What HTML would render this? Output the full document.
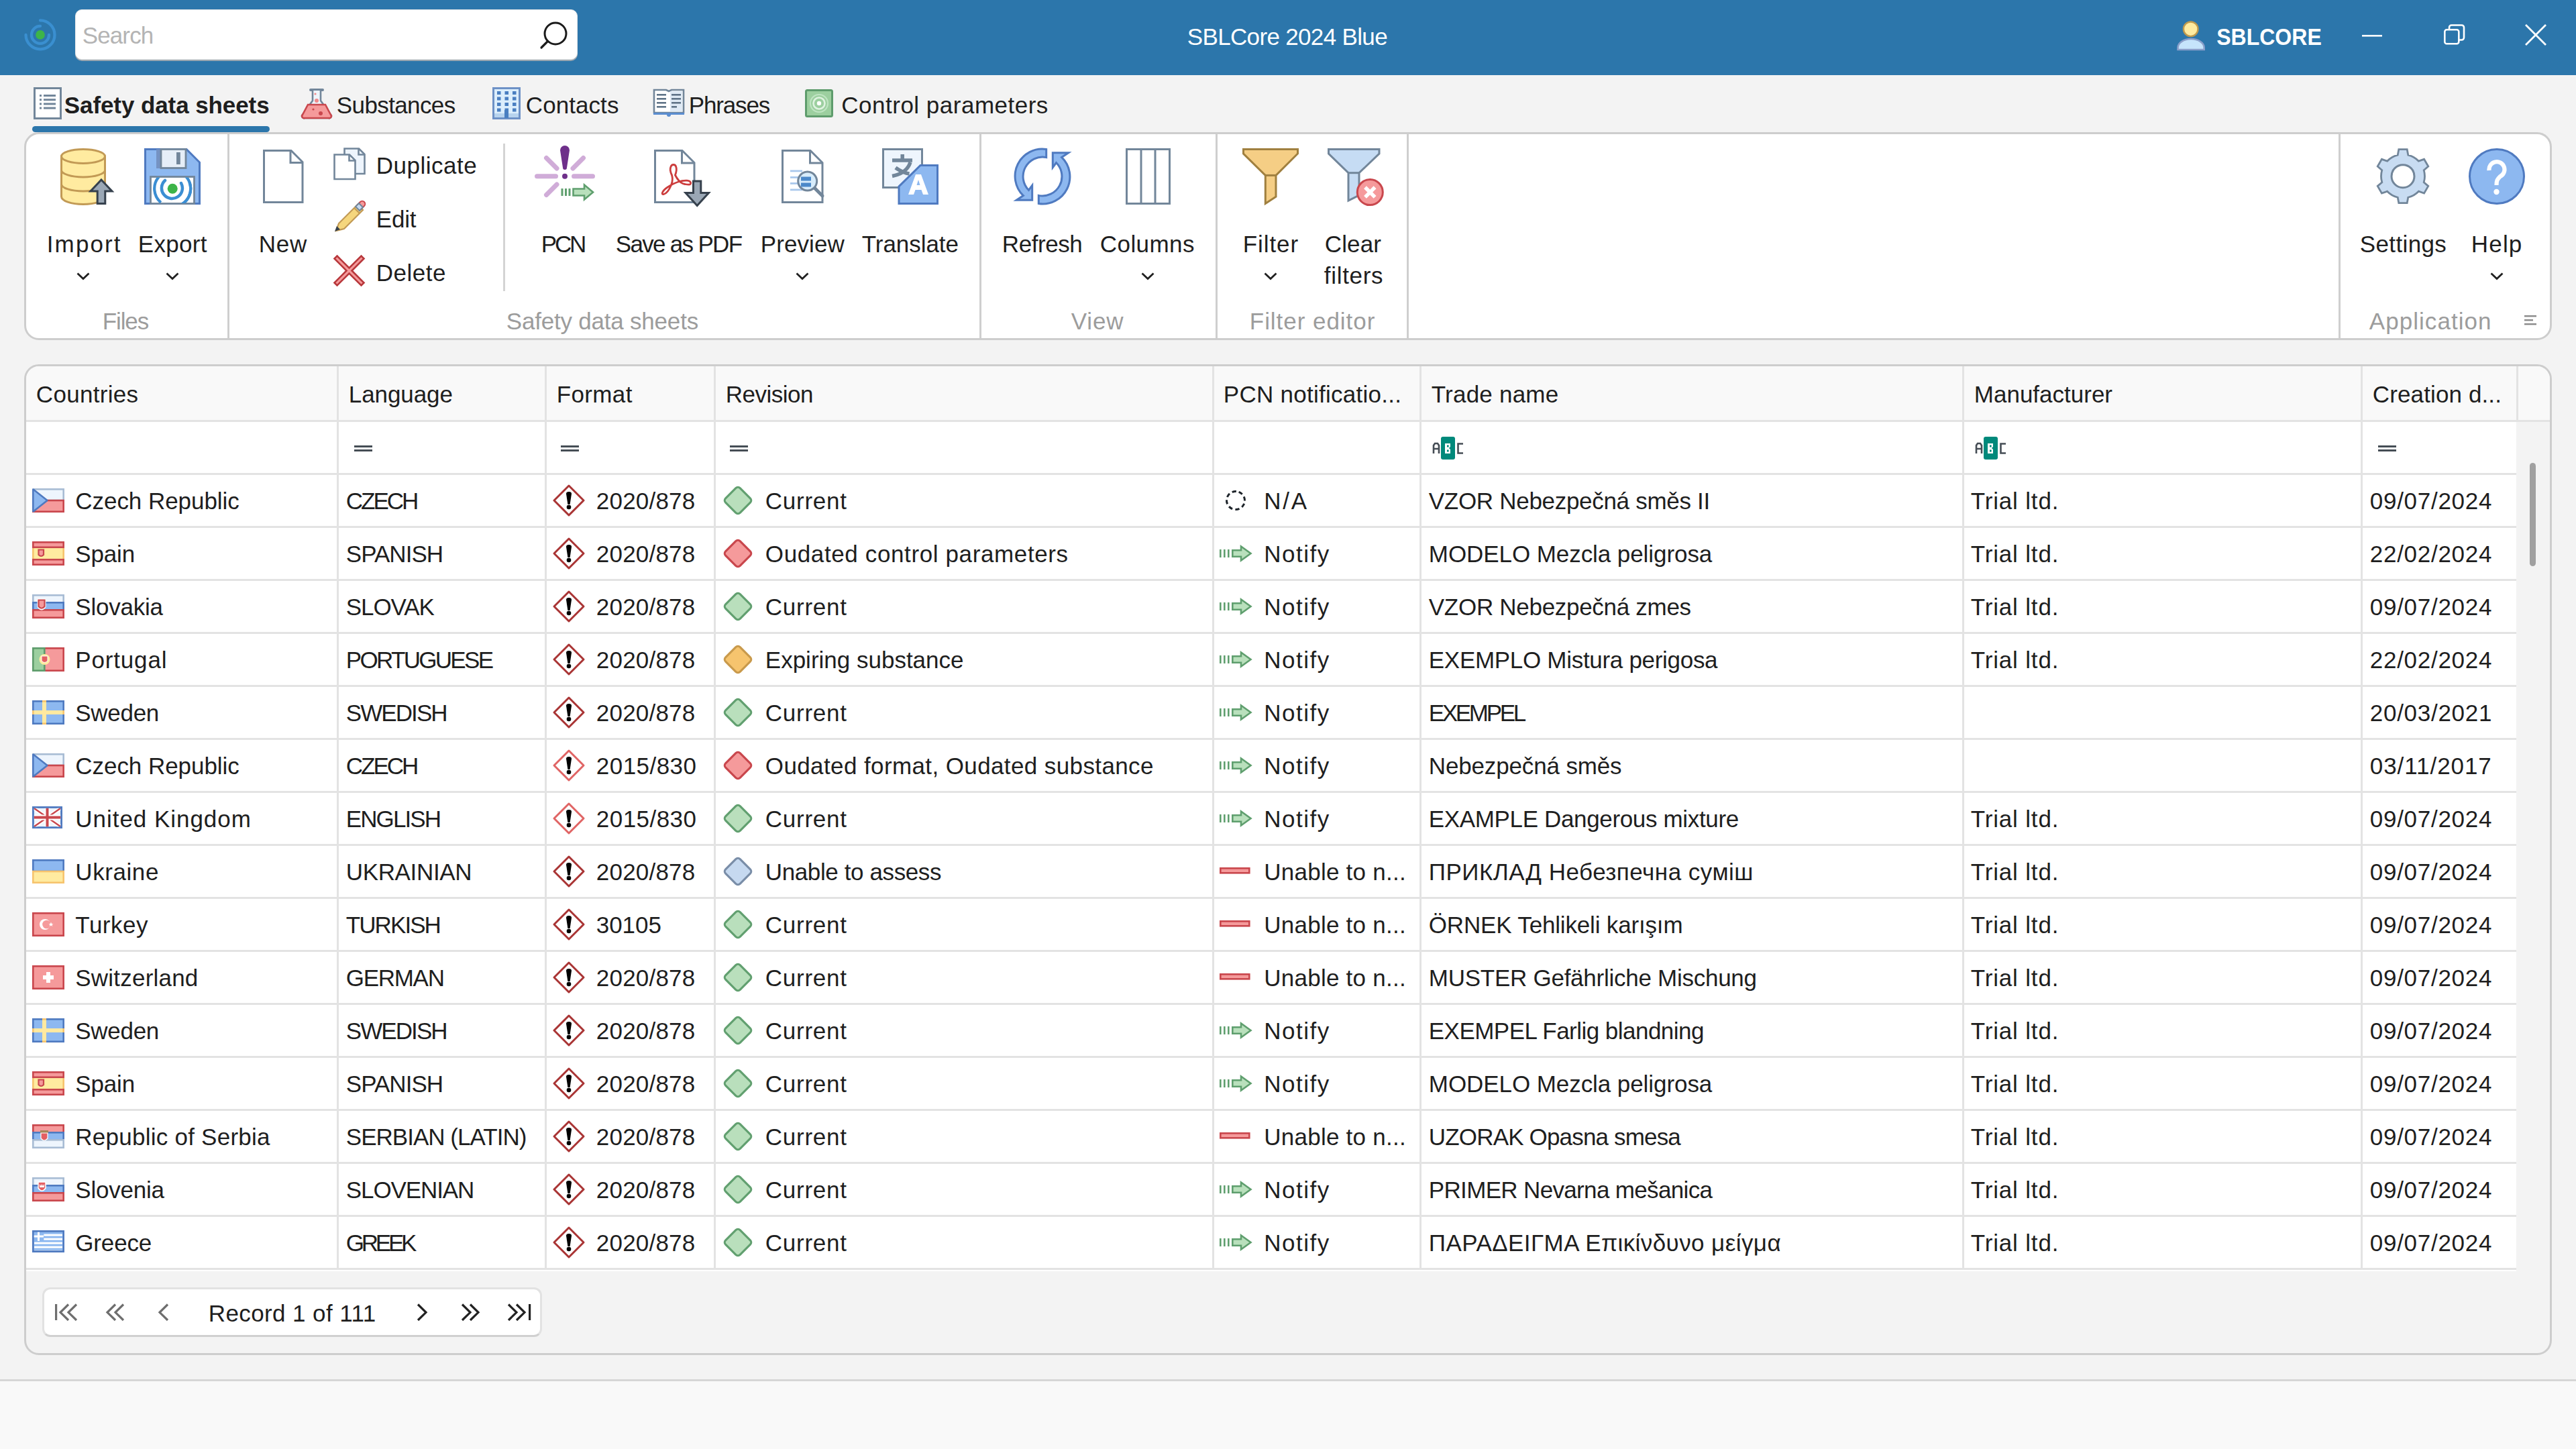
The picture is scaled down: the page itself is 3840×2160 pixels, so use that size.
<!DOCTYPE html><html><head><meta charset="utf-8"><style>
html,body{margin:0;padding:0;overflow:hidden;}
body{width:3840px;height:2160px;overflow:hidden;position:relative;background:#f3f3f3;font-family:"Liberation Sans",sans-serif;}
.t{position:absolute;white-space:nowrap;}
svg{overflow:visible}
</style></head><body>
<div style="position:absolute;left:0px;top:0px;width:3840px;height:112px;background:#2c76ab"></div><svg style="position:absolute;left:36px;top:28px" width="48" height="48" viewBox="0 0 48 48"><path d="M24 2.4 A21.5 21.5 0 1 1 2.5 23.9" fill="none" stroke="#3a8fd0" stroke-width="4.3" stroke-linecap="round"/><path d="M37 23.9 A13 13 0 1 1 24 10.9" fill="none" stroke="#3a8fd0" stroke-width="4.3" stroke-linecap="round"/><circle cx="24" cy="23.9" r="6.8" fill="#3db449"/></svg><div style="position:absolute;left:112px;top:14px;width:749px;height:75px;background:#fff;border-radius:10px;box-shadow:0 2px 0 #9aa6b0;box-sizing:border-box;border:1px solid #e8e8e8"></div><div class="t" style="left:122.8px;top:35.4px;font-size:35px;line-height:35px;color:#b4b4b4;letter-spacing:-0.90px;">Search</div><svg style="position:absolute;left:800px;top:30px" width="48" height="48" viewBox="0 0 48 48"><circle cx="28" cy="20" r="16" fill="none" stroke="#1b1b1b" stroke-width="3"/><line x1="16.5" y1="31.5" x2="7" y2="41" stroke="#1b1b1b" stroke-width="3.2" stroke-linecap="round"/></svg><div class="t" style="left:1769.8px;top:37.2px;font-size:35px;line-height:35px;color:#ffffff;letter-spacing:-0.66px;">SBLCore 2024 Blue</div><svg style="position:absolute;left:3243px;top:30px" width="48" height="48" viewBox="0 0 48 48"><circle cx="22.7" cy="13.3" r="10.8" fill="#ffeba0" stroke="#bf9a4e" stroke-width="2.4"/><path d="M3.5 44 V41 A19.6 13 0 0 1 42.7 41 V44 Z" fill="#c6e4fb" stroke="#8a9fca" stroke-width="2.6"/></svg><div class="t" style="left:3303.8px;top:37.1px;font-size:35px;line-height:35px;color:#ffffff;font-weight:700;transform:scaleX(0.9150);transform-origin:2.2px 0;">SBLCORE</div><svg style="position:absolute;left:3521px;top:52px" width="30" height="3" viewBox="0 0 30 3"><rect x="0" y="0" width="30" height="2.6" fill="#fff"/></svg><svg style="position:absolute;left:3643px;top:36px" width="32" height="32" viewBox="0 0 32 32"><rect x="1.3" y="8.3" width="21" height="21" rx="3" fill="none" stroke="#fff" stroke-width="2.6"/><path d="M8 8 V5 a3.5 3.5 0 0 1 3.5 -3.5 H26.5 a3.5 3.5 0 0 1 3.5 3.5 V20 a3.5 3.5 0 0 1 -3.5 3.5 H23" fill="none" stroke="#fff" stroke-width="2.6"/></svg><svg style="position:absolute;left:3764px;top:36px" width="32" height="32" viewBox="0 0 32 32"><path d="M1 1 L31 31 M31 1 L1 31" stroke="#fff" stroke-width="2.8"/></svg><svg style="position:absolute;left:50px;top:130px" width="42" height="48" viewBox="0 0 42 48"><rect x="1.5" y="1.5" width="39" height="45" fill="#fff" stroke="#72869a" stroke-width="3"/><rect x="9" y="11.0" width="3" height="3" fill="#72869a"/><rect x="15" y="11.0" width="18" height="3" fill="#72869a"/><rect x="9" y="17.2" width="3" height="3" fill="#72869a"/><rect x="15" y="17.2" width="18" height="3" fill="#72869a"/><rect x="9" y="23.4" width="3" height="3" fill="#72869a"/><rect x="15" y="23.4" width="18" height="3" fill="#72869a"/><rect x="9" y="29.6" width="3" height="3" fill="#72869a"/><rect x="15" y="29.6" width="18" height="3" fill="#72869a"/></svg><div class="t" style="left:95.8px;top:139.0px;font-size:35px;line-height:35px;color:#1e1e1e;font-weight:700;letter-spacing:-0.09px;">Safety data sheets</div><div style="position:absolute;left:48px;top:188px;width:354px;height:9px;background:#2c76ab;border-radius:5px"></div><svg style="position:absolute;left:448px;top:130px" width="48" height="48" viewBox="0 0 48 48"><path d="M15 4 H33" stroke="#72869a" stroke-width="4" stroke-linecap="round"/><path d="M18 5 V20 L3 41 A3 3 0 0 0 6 46 H42 A3 3 0 0 0 45 41 L30 20 V5" fill="#eef5fb" stroke="#72869a" stroke-width="2.6"/><path d="M11 26 H37 L45 41 A3 3 0 0 1 42 46 H6 A3 3 0 0 1 3 41 Z" fill="#f59a9b" stroke="#c9474d" stroke-width="2.6"/><circle cx="22" cy="10" r="1.6" fill="#f08a8c"/><circle cx="24" cy="20" r="3" fill="#f08a8c"/><circle cx="19" cy="33" r="1.6" fill="#c9474d"/><circle cx="30" cy="39" r="3" fill="#c9474d"/></svg><div class="t" style="left:501.8px;top:139.0px;font-size:35px;line-height:35px;color:#1e1e1e;letter-spacing:-0.61px;">Substances</div><svg style="position:absolute;left:734px;top:130px" width="42" height="48" viewBox="0 0 42 48"><rect x="1.5" y="1.5" width="39" height="45" fill="#dceefc" stroke="#6d91c6" stroke-width="3"/><rect x="7.0" y="6.0" width="5.5" height="5" fill="#4a7fc1"/><rect x="18.5" y="6.0" width="5.5" height="5" fill="#4a7fc1"/><rect x="30.0" y="6.0" width="5.5" height="5" fill="#4a7fc1"/><rect x="7.0" y="14.5" width="5.5" height="5" fill="#4a7fc1"/><rect x="18.5" y="14.5" width="5.5" height="5" fill="#4a7fc1"/><rect x="30.0" y="14.5" width="5.5" height="5" fill="#4a7fc1"/><rect x="7.0" y="23.0" width="5.5" height="5" fill="#4a7fc1"/><rect x="18.5" y="23.0" width="5.5" height="5" fill="#4a7fc1"/><rect x="30.0" y="23.0" width="5.5" height="5" fill="#4a7fc1"/><rect x="7.0" y="31.5" width="5.5" height="5" fill="#4a7fc1"/><rect x="18.5" y="31.5" width="5.5" height="5" fill="#4a7fc1"/><rect x="30.0" y="31.5" width="5.5" height="5" fill="#4a7fc1"/><rect x="3" y="39" width="36" height="6" fill="#b7d3ee"/><rect x="18" y="34" width="6" height="12" fill="#4a7fc1"/></svg><div class="t" style="left:783.8px;top:139.0px;font-size:35px;line-height:35px;color:#1e1e1e;letter-spacing:0.07px;">Contacts</div><svg style="position:absolute;left:973px;top:130px" width="48" height="44" viewBox="0 0 48 44"><path d="M2 4 H20 L24 6 L28 4 H46 V38 H2 Z" fill="#fff" stroke="#72869a" stroke-width="2.6"/><rect x="26" y="6" width="18" height="30" fill="#dfeaf5"/><path d="M1 38 H47 V41 H1 Z" fill="#5b8dd0"/><circle cx="24" cy="41" r="3" fill="#5b8dd0"/><rect x="6" y="10" width="14" height="2.6" fill="#5f7387"/><rect x="28" y="10" width="14" height="2.6" fill="#5f7387"/><rect x="6" y="16" width="14" height="2.6" fill="#5f7387"/><rect x="28" y="16" width="14" height="2.6" fill="#5f7387"/><rect x="6" y="22" width="14" height="2.6" fill="#5f7387"/><rect x="28" y="22" width="14" height="2.6" fill="#5f7387"/><rect x="6" y="28" width="14" height="2.6" fill="#5f7387"/><rect x="28" y="28" width="8" height="2.6" fill="#5f7387"/></svg><div class="t" style="left:1026.8px;top:139.0px;font-size:35px;line-height:35px;color:#1e1e1e;letter-spacing:-1.17px;">Phrases</div><svg style="position:absolute;left:1200px;top:133px" width="42" height="42" viewBox="0 0 42 42"><rect x="1.5" y="1.5" width="39" height="39" rx="2" fill="#9ccf9f" stroke="#5e9c6c" stroke-width="3"/><circle cx="21" cy="21" r="13" fill="none" stroke="#c8e8ca" stroke-width="2.2" opacity="0.8"/><circle cx="21" cy="21" r="8.5" fill="none" stroke="#dff2e0" stroke-width="2.6"/><circle cx="21" cy="21" r="3.2" fill="#fff"/></svg><div class="t" style="left:1254.3px;top:139.0px;font-size:35px;line-height:35px;color:#1e1e1e;letter-spacing:0.50px;">Control parameters</div><div style="position:absolute;left:36px;top:197px;width:3768px;height:310px;background:#fff;border:3px solid #cdcdcd;border-radius:22px;box-sizing:border-box"></div><div style="position:absolute;left:339px;top:200px;width:3px;height:304px;background:#cfcfcf"></div><div style="position:absolute;left:1460px;top:200px;width:3px;height:304px;background:#cfcfcf"></div><div style="position:absolute;left:1812px;top:200px;width:3px;height:304px;background:#cfcfcf"></div><div style="position:absolute;left:2097px;top:200px;width:3px;height:304px;background:#cfcfcf"></div><div style="position:absolute;left:3486px;top:200px;width:3px;height:304px;background:#cfcfcf"></div><div style="position:absolute;left:750px;top:214px;width:3px;height:220px;background:#d4d4d4"></div><svg style="position:absolute;left:88px;top:221px" width="84" height="84" viewBox="0 0 84 84"><path d="M3.5 12 V72 A32.5 11.6 0 0 0 68.5 72 V12" fill="#ffeba0" stroke="#c29a55" stroke-width="3"/><ellipse cx="36" cy="12" rx="32.5" ry="10.5" fill="#ffeba0" stroke="#c29a55" stroke-width="3"/><path d="M3.5 32.5 A32.5 10.5 0 0 0 68.5 32.5" fill="none" stroke="#c29a55" stroke-width="3"/><path d="M3.5 53.5 A32.5 10.5 0 0 0 68.5 53.5" fill="none" stroke="#c29a55" stroke-width="3"/><path d="M63 47 L79 64 H68.8 V82.5 H57.2 V64 H47 Z" fill="#9aa7b5" stroke="#36414d" stroke-width="3" stroke-linejoin="miter"/></svg><div class="t" style="left:69.8px;top:345.8px;font-size:35px;line-height:35px;color:#1e1e1e;letter-spacing:2.10px;">Import</div><svg style="position:absolute;left:114px;top:405.5px" width="20" height="12" viewBox="0 0 20 12"><path d="M1.5 1.5 L10 9.5 L18.5 1.5" fill="none" stroke="#202020" stroke-width="2.8"/></svg><svg style="position:absolute;left:215px;top:221px" width="84" height="84" viewBox="0 0 84 84"><defs><clipPath id="fl"><rect x="10.5" y="43.5" width="63" height="38.5"/></clipPath></defs><path d="M1.5 1.5 H63 L82.5 21 V82.5 H1.5 Z" fill="#8db8f0" stroke="#4f7ac0" stroke-width="3"/><rect x="18" y="1.5" width="44" height="28.5" fill="#7592c2"/><rect x="25" y="1.5" width="37" height="28" fill="#e6eef7" stroke="#72869a" stroke-width="2.8"/><rect x="48" y="6" width="5.8" height="18" fill="#72869a"/><rect x="9.5" y="42.5" width="65" height="40" fill="#fff" stroke="#72869a" stroke-width="2.8"/><g clip-path="url(#fl)"><circle cx="42.2" cy="60.2" r="27" fill="none" stroke="#3b8ed3" stroke-width="4.2" stroke-dasharray="50 35" transform="rotate(130 42.2 60.2)"/><circle cx="42.2" cy="60.2" r="27" fill="none" stroke="#3b8ed3" stroke-width="4.2" stroke-dasharray="50 150" transform="rotate(-20 42.2 60.2)"/></g><path d="M31 48 A15.5 15.5 0 1 0 55 52" fill="none" stroke="#3b8ed3" stroke-width="4.5" stroke-linecap="round"/><circle cx="42.2" cy="60.2" r="7.5" fill="#3db449"/></svg><div class="t" style="left:205.8px;top:345.8px;font-size:35px;line-height:35px;color:#1e1e1e;letter-spacing:0.30px;">Export</div><svg style="position:absolute;left:247px;top:405.5px" width="20" height="12" viewBox="0 0 20 12"><path d="M1.5 1.5 L10 9.5 L18.5 1.5" fill="none" stroke="#202020" stroke-width="2.8"/></svg><div class="t" style="left:152.8px;top:461.0px;font-size:35px;line-height:35px;color:#9c9c9c;letter-spacing:-1.12px;">Files</div><svg style="position:absolute;left:380px;top:221px" width="84" height="84" viewBox="0 0 84 84"><path d="M13.5 3.5 H54 L71 20.5 V80.5 H13.5 Z" fill="#fff" stroke="#72869a" stroke-width="3"/><path d="M53 3.5 V21.5 H71" fill="none" stroke="#72869a" stroke-width="3"/></svg><div class="t" style="left:385.8px;top:345.8px;font-size:35px;line-height:35px;color:#1e1e1e;letter-spacing:0.75px;">New</div><svg style="position:absolute;left:497px;top:220px" width="48" height="48" viewBox="0 0 48 48"><path d="M16.5 1.5 H38 L46.5 10 V39 H16.5 Z" fill="#eef5fd" stroke="#72869a" stroke-width="2.6"/><path d="M37.5 1.5 V10.5 H46.5" fill="none" stroke="#72869a" stroke-width="2.6"/><path d="M1.5 10.5 H24 L32.5 19 V47 H1.5 Z" fill="#fff" stroke="#72869a" stroke-width="2.6"/><path d="M23.5 10.5 V19.5 H32.5" fill="none" stroke="#72869a" stroke-width="2.6"/></svg><div class="t" style="left:560.8px;top:229.4px;font-size:35px;line-height:35px;color:#1e1e1e;letter-spacing:0.51px;">Duplicate</div><svg style="position:absolute;left:497px;top:299px" width="48" height="48" viewBox="0 0 48 48"><path d="M8 34 L36 6 L44 14 L16 42 L4 45 Z" fill="#f5d67d" stroke="#c29a55" stroke-width="2.2"/><path d="M31 11 L39 19" stroke="#c29a55" stroke-width="2"/><path d="M35 7 L40 2 A4 4 0 0 1 46 8 L41 13 Z" fill="#f59a9b" stroke="#c9474d" stroke-width="2"/><path d="M33 9 L38 4 L44 10 L39 15 Z" fill="#c6d9f0" stroke="#72869a" stroke-width="2"/><path d="M2 46 L5 38 L10 43 Z" fill="#36414d"/></svg><div class="t" style="left:560.8px;top:308.9px;font-size:35px;line-height:35px;color:#1e1e1e;letter-spacing:-0.17px;">Edit</div><svg style="position:absolute;left:498px;top:380px" width="46" height="47" viewBox="0 0 46 47"><path d="M4.5 1.5 L22.5 19.5 L40.5 1.5 L44.5 5.5 L26.5 23.5 L44.5 41.5 L40.5 45.5 L22.5 27.5 L4.5 45.5 L0.5 41.5 L18.5 23.5 L0.5 5.5 Z" fill="#f59a9b" stroke="#b8383c" stroke-width="2.6" stroke-linejoin="miter"/></svg><div class="t" style="left:560.8px;top:388.9px;font-size:35px;line-height:35px;color:#1e1e1e;letter-spacing:0.50px;">Delete</div><svg style="position:absolute;left:800px;top:221px" width="84" height="84" viewBox="0 0 84 84"><g stroke="#d0acd8" stroke-width="7" stroke-linecap="round"><line x1="0.5" y1="41.8" x2="28.5" y2="41.8"/><line x1="55.5" y1="41.8" x2="83.5" y2="41.8"/><line x1="14.5" y1="14.5" x2="30" y2="30"/><line x1="69.5" y1="14.5" x2="54" y2="30"/><line x1="14.5" y1="69.5" x2="30" y2="54"/></g><path d="M35 3 A7 7 0 0 1 49 3 L45 29 A3 3 0 0 1 39 29 Z" fill="#6e2f8a"/><circle cx="42" cy="41.8" r="4" fill="#6e2f8a"/><g fill="#5f9f6e"><rect x="36.5" y="60" width="3" height="11"/><rect x="42" y="60" width="3" height="11"/><rect x="47.5" y="60" width="3" height="11"/></g><path d="M54.5 60.5 H71 V54.5 L84 65.5 L71 76.5 V70.5 H54.5 Z" fill="#b9e0bc" stroke="#5f9f6e" stroke-width="2.6"/></svg><div class="t" style="left:806.8px;top:345.8px;font-size:35px;line-height:35px;color:#1e1e1e;letter-spacing:-3.25px;">PCN</div><svg style="position:absolute;left:975px;top:221px" width="84" height="84" viewBox="0 0 84 84"><path d="M1.5 3.5 H42 L60 21.5 V80.5 H1.5 Z" fill="#fff" stroke="#72869a" stroke-width="3"/><path d="M41.5 3.5 V22 H60" fill="none" stroke="#72869a" stroke-width="3"/><path d="M26.5 40 C22 31 25 24.5 29 24.5 C33 24.5 35 31 31.5 40 C35 47 40 52.5 46 53.5 C51 54.5 55.5 55 54.5 51 C53.5 47.5 46 47.5 40 49 C32 51 25 54.5 19.5 58.5 C11.5 64 10.5 69.5 14.5 68.5 C18.5 67.5 22.5 62 25.5 55 C28 49 28 45 26.5 40 Z" fill="none" stroke="#cc3d3d" stroke-width="2.8"/><path d="M58.5 49 H69.8 V66.5 H81.5 L64.2 85.5 L47 66.5 H58.5 Z" fill="#9aa7b5" stroke="#36414d" stroke-width="3"/></svg><div class="t" style="left:917.8px;top:345.8px;font-size:35px;line-height:35px;color:#1e1e1e;letter-spacing:-1.69px;">Save as PDF</div><svg style="position:absolute;left:1163px;top:221px" width="84" height="84" viewBox="0 0 84 84"><path d="M3.5 3.5 H45 L63 21.5 V80.5 H3.5 Z" fill="#fff" stroke="#72869a" stroke-width="3"/><path d="M44.5 3.5 V22 H63" fill="none" stroke="#72869a" stroke-width="3"/><g fill="#a9c8ec"><rect x="15" y="32.5" width="18" height="2.8"/><rect x="15" y="42" width="12" height="2.8"/><rect x="15" y="51" width="12" height="2.8"/><rect x="15" y="60.5" width="18" height="2.8"/></g><line x1="50" y1="58" x2="63" y2="71" stroke="#72869a" stroke-width="5" stroke-linecap="round"/><circle cx="40.7" cy="49" r="14" fill="#d7ecfb" stroke="#72869a" stroke-width="3"/><g fill="#4a88c9"><rect x="31" y="42.5" width="15" height="6"/><rect x="31" y="51.5" width="15" height="6"/></g></svg><div class="t" style="left:1133.8px;top:345.8px;font-size:35px;line-height:35px;color:#1e1e1e;letter-spacing:0.08px;">Preview</div><svg style="position:absolute;left:1186px;top:405.5px" width="20" height="12" viewBox="0 0 20 12"><path d="M1.5 1.5 L10 9.5 L18.5 1.5" fill="none" stroke="#202020" stroke-width="2.8"/></svg><svg style="position:absolute;left:1315px;top:221px" width="84" height="84" viewBox="0 0 84 84"><rect x="1.5" y="1.5" width="58" height="57" fill="#eef5fd" stroke="#72869a" stroke-width="3"/><path d="M30.2 9 V18 M15 18 H45 M42 21 C38 33 28 39 15 41.5 M20 29 C27 34 34 37 40.5 38" fill="none" stroke="#72869a" stroke-width="5.5"/><path d="M57 25.5 H82.5 V82.5 H25 V57 Z" fill="#8db8f0" stroke="#4f7ac0" stroke-width="3"/><path d="M39 69 L50 39 H58 L69 69 H61 L58.5 62 H49.5 L47 69 Z M51.5 55 H56.5 L54 47 Z" fill="#fff"/></svg><div class="t" style="left:1284.8px;top:345.8px;font-size:35px;line-height:35px;color:#1e1e1e;letter-spacing:-0.06px;">Translate</div><div class="t" style="left:754.8px;top:461.0px;font-size:35px;line-height:35px;color:#9c9c9c;letter-spacing:-0.21px;">Safety data sheets</div><svg style="position:absolute;left:1512px;top:221px" width="84" height="84" viewBox="0 0 84 84"><path d="M47.7 1.5 A40.5 40.5 0 0 0 13.4 70.6 L3.3 77.3 H26.7 V55.4 L21.5 62.5 A29 29 0 0 1 47.7 13.6 Z" fill="#8db8f0" stroke="#4f7ac0" stroke-width="3" stroke-linejoin="miter"/><path d="M36.3 82.5 A40.5 40.5 0 0 0 70.6 13.4 L80.7 6.7 H57.3 V28.6 L62.5 21.5 A29 29 0 0 1 36.3 70.4 Z" fill="#8db8f0" stroke="#4f7ac0" stroke-width="3" stroke-linejoin="miter"/></svg><div class="t" style="left:1493.8px;top:345.8px;font-size:35px;line-height:35px;color:#1e1e1e;letter-spacing:-0.42px;">Refresh</div><svg style="position:absolute;left:1670px;top:221px" width="84" height="84" viewBox="0 0 84 84"><rect x="9.5" y="1.5" width="64" height="81" fill="#fff" stroke="#72869a" stroke-width="3"/><line x1="31" y1="1.5" x2="31" y2="82.5" stroke="#72869a" stroke-width="3"/><line x1="52" y1="1.5" x2="52" y2="82.5" stroke="#72869a" stroke-width="3"/></svg><div class="t" style="left:1639.8px;top:345.8px;font-size:35px;line-height:35px;color:#1e1e1e;letter-spacing:0.42px;">Columns</div><svg style="position:absolute;left:1701px;top:405.5px" width="20" height="12" viewBox="0 0 20 12"><path d="M1.5 1.5 L10 9.5 L18.5 1.5" fill="none" stroke="#202020" stroke-width="2.8"/></svg><div class="t" style="left:1596.8px;top:461.0px;font-size:35px;line-height:35px;color:#9c9c9c;letter-spacing:0.83px;">View</div><svg style="position:absolute;left:1852px;top:221px" width="84" height="84" viewBox="0 0 84 84"><path d="M1.5 1.5 H82.5 V8 L50 40.4 V72.3 L34.3 82.5 V40.4 L1.5 8 Z" fill="#f5ce85" stroke="#a0803f" stroke-width="3" stroke-linejoin="miter"/><line x1="34.3" y1="40.4" x2="50" y2="40.4" stroke="#a0803f" stroke-width="3"/></svg><div class="t" style="left:1852.8px;top:345.8px;font-size:35px;line-height:35px;color:#1e1e1e;letter-spacing:0.90px;">Filter</div><svg style="position:absolute;left:1884px;top:405.5px" width="20" height="12" viewBox="0 0 20 12"><path d="M1.5 1.5 L10 9.5 L18.5 1.5" fill="none" stroke="#202020" stroke-width="2.8"/></svg><svg style="position:absolute;left:1979px;top:221px" width="84" height="84" viewBox="0 0 84 84"><path d="M1.5 1.5 H77 V8 L47 36.7 V70 L31 78 V36.7 L1.5 8 Z" fill="#c6dcf4" stroke="#72869a" stroke-width="3" stroke-linejoin="miter"/><line x1="31" y1="36.7" x2="47" y2="36.7" stroke="#72869a" stroke-width="3"/><circle cx="63.3" cy="65.6" r="19" fill="#f59a9b" stroke="#c9474d" stroke-width="3"/><path d="M56 58.3 L70.6 72.9 M70.6 58.3 L56 72.9" stroke="#fff" stroke-width="5.5"/></svg><div class="t" style="left:1974.8px;top:345.8px;font-size:35px;line-height:35px;color:#1e1e1e;letter-spacing:0.12px;">Clear</div><div class="t" style="left:1973.8px;top:393.4px;font-size:35px;line-height:35px;color:#1e1e1e;letter-spacing:0.70px;">filters</div><div class="t" style="left:1862.8px;top:461.0px;font-size:35px;line-height:35px;color:#9c9c9c;letter-spacing:0.96px;">Filter editor</div><svg style="position:absolute;left:3540px;top:221px" width="84" height="84" viewBox="0 0 84 84"><path d="M34.20 10.15 L35.80 1.68 L48.20 1.68 L49.80 10.15 A32.5 32.5 0 0 1 65.42 19.17 L65.42 19.17 L73.56 16.32 L79.76 27.06 L73.22 32.68 A32.5 32.5 0 0 1 73.22 50.72 L73.22 50.72 L79.76 56.34 L73.56 67.08 L65.42 64.23 A32.5 32.5 0 0 1 49.80 73.25 L49.80 73.25 L48.20 81.72 L35.80 81.72 L34.20 73.25 A32.5 32.5 0 0 1 18.58 64.23 L18.58 64.23 L10.44 67.08 L4.24 56.34 L10.78 50.72 A32.5 32.5 0 0 1 10.78 32.68 L10.78 32.68 L4.24 27.06 L10.44 16.32 L18.58 19.17 A32.5 32.5 0 0 1 34.20 10.15 Z" fill="#c8dcf2" stroke="#72869a" stroke-width="2.8" stroke-linejoin="miter"/><circle cx="42" cy="41.7" r="17" fill="#fff" stroke="#72869a" stroke-width="3"/></svg><div class="t" style="left:3517.8px;top:345.8px;font-size:35px;line-height:35px;color:#1e1e1e;letter-spacing:0.36px;">Settings</div><svg style="position:absolute;left:3680px;top:221px" width="84" height="84" viewBox="0 0 84 84"><circle cx="42" cy="42" r="40.5" fill="#8db8f0" stroke="#4f7ac0" stroke-width="3"/><path d="M30.5 33 A11.5 11.5 0 1 1 47 42 C42.5 46.5 41.5 48 41.5 55" fill="none" stroke="#fff" stroke-width="6.2"/><circle cx="41.5" cy="65" r="4.2" fill="#fff"/></svg><div class="t" style="left:3683.8px;top:345.8px;font-size:35px;line-height:35px;color:#1e1e1e;letter-spacing:1.17px;">Help</div><svg style="position:absolute;left:3712px;top:405.5px" width="20" height="12" viewBox="0 0 20 12"><path d="M1.5 1.5 L10 9.5 L18.5 1.5" fill="none" stroke="#202020" stroke-width="2.8"/></svg><div class="t" style="left:3531.8px;top:461.0px;font-size:35px;line-height:35px;color:#9c9c9c;letter-spacing:1.05px;">Application</div><svg style="position:absolute;left:3763px;top:470px" width="18" height="15" viewBox="0 0 18 15"><g fill="#8a8a8a"><rect x="0" y="0" width="18" height="2.4"/><rect x="0" y="6" width="13" height="2.4"/><rect x="0" y="12" width="18" height="2.4"/></g></svg><div style="position:absolute;left:36px;top:543px;width:3768px;height:1477px;background:#f3f3f3;border:3px solid #cdcdcd;border-radius:22px;box-sizing:border-box;overflow:hidden"></div><div style="position:absolute;left:39px;top:546px;width:3762px;height:80px;background:#f9f9f9;border-radius:19px 19px 0 0"></div><div style="position:absolute;left:39px;top:629px;width:3712px;height:1266px;background:#ffffff"></div><div style="position:absolute;left:502px;top:546px;width:3px;height:1347px;background:#e3e3e3"></div><div style="position:absolute;left:812px;top:546px;width:3px;height:1347px;background:#e3e3e3"></div><div style="position:absolute;left:1064px;top:546px;width:3px;height:1347px;background:#e3e3e3"></div><div style="position:absolute;left:1807px;top:546px;width:3px;height:1347px;background:#e3e3e3"></div><div style="position:absolute;left:2116px;top:546px;width:3px;height:1347px;background:#e3e3e3"></div><div style="position:absolute;left:2925px;top:546px;width:3px;height:1347px;background:#e3e3e3"></div><div style="position:absolute;left:3519px;top:546px;width:3px;height:1347px;background:#e3e3e3"></div><div style="position:absolute;left:3751px;top:546px;width:3px;height:80px;background:#e3e3e3"></div><div style="position:absolute;left:39px;top:626px;width:3762px;height:3px;background:#e3e3e3"></div><div style="position:absolute;left:39px;top:705px;width:3712px;height:3px;background:#e3e3e3"></div><div style="position:absolute;left:39px;top:784px;width:3712px;height:3px;background:#e3e3e3"></div><div style="position:absolute;left:39px;top:863px;width:3712px;height:3px;background:#e3e3e3"></div><div style="position:absolute;left:39px;top:942px;width:3712px;height:3px;background:#e3e3e3"></div><div style="position:absolute;left:39px;top:1021px;width:3712px;height:3px;background:#e3e3e3"></div><div style="position:absolute;left:39px;top:1100px;width:3712px;height:3px;background:#e3e3e3"></div><div style="position:absolute;left:39px;top:1179px;width:3712px;height:3px;background:#e3e3e3"></div><div style="position:absolute;left:39px;top:1258px;width:3712px;height:3px;background:#e3e3e3"></div><div style="position:absolute;left:39px;top:1337px;width:3712px;height:3px;background:#e3e3e3"></div><div style="position:absolute;left:39px;top:1416px;width:3712px;height:3px;background:#e3e3e3"></div><div style="position:absolute;left:39px;top:1495px;width:3712px;height:3px;background:#e3e3e3"></div><div style="position:absolute;left:39px;top:1574px;width:3712px;height:3px;background:#e3e3e3"></div><div style="position:absolute;left:39px;top:1653px;width:3712px;height:3px;background:#e3e3e3"></div><div style="position:absolute;left:39px;top:1732px;width:3712px;height:3px;background:#e3e3e3"></div><div style="position:absolute;left:39px;top:1811px;width:3712px;height:3px;background:#e3e3e3"></div><div style="position:absolute;left:39px;top:1890px;width:3712px;height:3px;background:#e3e3e3"></div><div class="t" style="left:53.8px;top:570.4px;font-size:35px;line-height:35px;color:#1e1e1e;letter-spacing:0.31px;">Countries</div><div class="t" style="left:519.8px;top:570.4px;font-size:35px;line-height:35px;color:#1e1e1e;letter-spacing:-0.09px;">Language</div><div class="t" style="left:829.8px;top:570.4px;font-size:35px;line-height:35px;color:#1e1e1e;letter-spacing:0.35px;">Format</div><div class="t" style="left:1081.8px;top:570.4px;font-size:35px;line-height:35px;color:#1e1e1e;letter-spacing:-0.52px;">Revision</div><div class="t" style="left:1823.8px;top:570.4px;font-size:35px;line-height:35px;color:#1e1e1e;letter-spacing:0.26px;">PCN notificatio...</div><div class="t" style="left:2133.8px;top:570.4px;font-size:35px;line-height:35px;color:#1e1e1e;letter-spacing:0.22px;">Trade name</div><div class="t" style="left:2942.8px;top:570.4px;font-size:35px;line-height:35px;color:#1e1e1e;">Manufacturer</div><div class="t" style="left:3536.8px;top:570.4px;font-size:35px;line-height:35px;color:#1e1e1e;letter-spacing:0.12px;">Creation d...</div><svg style="position:absolute;left:528px;top:664px" width="28" height="10" viewBox="0 0 28 10"><rect x="0" y="0" width="27" height="3" fill="#454d55"/><rect x="0" y="6" width="27" height="3" fill="#454d55"/></svg><svg style="position:absolute;left:836px;top:664px" width="28" height="10" viewBox="0 0 28 10"><rect x="0" y="0" width="27" height="3" fill="#454d55"/><rect x="0" y="6" width="27" height="3" fill="#454d55"/></svg><svg style="position:absolute;left:1088px;top:664px" width="28" height="10" viewBox="0 0 28 10"><rect x="0" y="0" width="27" height="3" fill="#454d55"/><rect x="0" y="6" width="27" height="3" fill="#454d55"/></svg><svg style="position:absolute;left:3545px;top:664px" width="28" height="10" viewBox="0 0 28 10"><rect x="0" y="0" width="27" height="3" fill="#454d55"/><rect x="0" y="6" width="27" height="3" fill="#454d55"/></svg><svg style="position:absolute;left:2135px;top:651px" width="48" height="34" viewBox="0 0 48 34"><rect x="13" y="0" width="21" height="34" rx="3" fill="#00897b"/><path d="M2 25 V13 L4 10 H8 L10 13 V25 M2 18 H10" fill="none" stroke="#454d55" stroke-width="2.6"/><path d="M19 10 H27 V15 L25 17 L27 19 V25 H19 Z" fill="#fff"/><rect x="22" y="12.5" width="2.6" height="3" fill="#00897b"/><rect x="22" y="19.5" width="2.6" height="3" fill="#00897b"/><path d="M46 10.5 H38.5 V24.5 H46" fill="none" stroke="#454d55" stroke-width="2.6"/></svg><svg style="position:absolute;left:2944px;top:651px" width="48" height="34" viewBox="0 0 48 34"><rect x="13" y="0" width="21" height="34" rx="3" fill="#00897b"/><path d="M2 25 V13 L4 10 H8 L10 13 V25 M2 18 H10" fill="none" stroke="#454d55" stroke-width="2.6"/><path d="M19 10 H27 V15 L25 17 L27 19 V25 H19 Z" fill="#fff"/><rect x="22" y="12.5" width="2.6" height="3" fill="#00897b"/><rect x="22" y="19.5" width="2.6" height="3" fill="#00897b"/><path d="M46 10.5 H38.5 V24.5 H46" fill="none" stroke="#454d55" stroke-width="2.6"/></svg><div style="position:absolute;left:3771px;top:690px;width:9px;height:154px;background:#a0a0a0;border-radius:4.5px"></div><svg style="position:absolute;left:48px;top:728px" width="48" height="36" viewBox="0 0 48 36"><rect x="1.3" y="1.3" width="45.4" height="16.7" fill="#eef5fd" stroke="#a8bcd4" stroke-width="2.6"/><rect x="1.3" y="18" width="45.4" height="16.7" fill="#f59a9b" stroke="#c9474d" stroke-width="2.6"/><path d="M1.3 1.3 L22.5 18 L1.3 34.7 Z" fill="#8db8f0" stroke="#4f7ac0" stroke-width="2.6" stroke-linejoin="bevel"/></svg><div class="t" style="left:112.3px;top:729.0px;font-size:35px;line-height:35px;color:#1e1e1e;letter-spacing:-0.05px;">Czech Republic</div><div class="t" style="left:515.8px;top:729.0px;font-size:35px;line-height:35px;color:#1e1e1e;letter-spacing:-3.00px;">CZECH</div><svg style="position:absolute;left:824px;top:722px" width="48" height="48" viewBox="0 0 48 48"><path d="M24 2 L46 24 L24 46 L2 24 Z" fill="#fff" stroke="#a93434" stroke-width="3" stroke-linejoin="round"/><path d="M20 14 Q20 11 24 11 Q28 11 28 14 L25.6 30 H22.4 Z" fill="#000"/><circle cx="24" cy="34" r="3.3" fill="#000"/></svg><div class="t" style="left:888.8px;top:729.0px;font-size:35px;line-height:35px;color:#1e1e1e;letter-spacing:0.21px;">2020/878</div><svg style="position:absolute;left:1078px;top:724px" width="44" height="44" viewBox="0 0 44 44"><rect x="6.75" y="6.75" width="30.5" height="30.5" rx="4.5" fill="#b9dfbc" stroke="#62a070" stroke-width="3.2" transform="rotate(45 22 22)"/></svg><div class="t" style="left:1140.8px;top:729.0px;font-size:35px;line-height:35px;color:#1e1e1e;letter-spacing:0.75px;">Current</div><svg style="position:absolute;left:1827px;top:731px" width="30" height="30" viewBox="0 0 30 30"><circle cx="15" cy="15" r="13.5" fill="none" stroke="#1e242a" stroke-width="3" stroke-dasharray="6.2 4.4" transform="rotate(-70 15 15)"/></svg><div class="t" style="left:1884.3px;top:729.0px;font-size:35px;line-height:35px;color:#1e1e1e;letter-spacing:2.75px;">N/A</div><div class="t" style="left:2129.8px;top:729.0px;font-size:35px;line-height:35px;color:#1e1e1e;letter-spacing:-0.30px;">VZOR Nebezpečná směs II</div><div class="t" style="left:2937.8px;top:729.0px;font-size:35px;line-height:35px;color:#1e1e1e;letter-spacing:0.83px;">Trial ltd.</div><div class="t" style="left:3532.8px;top:729.0px;font-size:35px;line-height:35px;color:#1e1e1e;letter-spacing:0.72px;">09/07/2024</div><svg style="position:absolute;left:48px;top:807px" width="48" height="36" viewBox="0 0 48 36"><rect x="1.3" y="1.3" width="45.4" height="33.4" fill="#ffeba0" stroke="#f6c46e" stroke-width="2.6"/><rect x="1.3" y="1.3" width="45.4" height="7.5" fill="#f59a9b" stroke="#c9474d" stroke-width="2.6"/><rect x="1.3" y="27.2" width="45.4" height="7.5" fill="#f59a9b" stroke="#c9474d" stroke-width="2.6"/><path d="M9.5 12.5 H17 V20 Q13.25 24 9.5 20 Z" fill="#f59a9b" stroke="#c9474d" stroke-width="2.2"/></svg><div class="t" style="left:112.3px;top:808.0px;font-size:35px;line-height:35px;color:#1e1e1e;letter-spacing:-0.18px;">Spain</div><div class="t" style="left:515.8px;top:808.0px;font-size:35px;line-height:35px;color:#1e1e1e;letter-spacing:-0.97px;">SPANISH</div><svg style="position:absolute;left:824px;top:801px" width="48" height="48" viewBox="0 0 48 48"><path d="M24 2 L46 24 L24 46 L2 24 Z" fill="#fff" stroke="#a93434" stroke-width="3" stroke-linejoin="round"/><path d="M20 14 Q20 11 24 11 Q28 11 28 14 L25.6 30 H22.4 Z" fill="#000"/><circle cx="24" cy="34" r="3.3" fill="#000"/></svg><div class="t" style="left:888.8px;top:808.0px;font-size:35px;line-height:35px;color:#1e1e1e;letter-spacing:0.21px;">2020/878</div><svg style="position:absolute;left:1078px;top:803px" width="44" height="44" viewBox="0 0 44 44"><rect x="6.75" y="6.75" width="30.5" height="30.5" rx="4.5" fill="#f59a9b" stroke="#c9474d" stroke-width="3.2" transform="rotate(45 22 22)"/></svg><div class="t" style="left:1140.8px;top:808.0px;font-size:35px;line-height:35px;color:#1e1e1e;letter-spacing:0.62px;">Oudated control parameters</div><svg style="position:absolute;left:1818px;top:813px" width="48" height="24" viewBox="0 0 48 24"><g fill="#5f9f6e"><rect x="0" y="6" width="2.6" height="12"/><rect x="6" y="6" width="2.6" height="12"/><rect x="12" y="6" width="2.6" height="12"/></g><path d="M19.3 7.3 H32 V1.5 L46.5 12 L32 22.5 V16.7 H19.3 Z" fill="#b9e0bc" stroke="#5f9f6e" stroke-width="2.6"/></svg><div class="t" style="left:1884.3px;top:808.0px;font-size:35px;line-height:35px;color:#1e1e1e;letter-spacing:1.50px;">Notify</div><div class="t" style="left:2129.8px;top:808.0px;font-size:35px;line-height:35px;color:#1e1e1e;letter-spacing:-0.07px;">MODELO Mezcla peligrosa</div><div class="t" style="left:2937.8px;top:808.0px;font-size:35px;line-height:35px;color:#1e1e1e;letter-spacing:0.83px;">Trial ltd.</div><div class="t" style="left:3532.8px;top:808.0px;font-size:35px;line-height:35px;color:#1e1e1e;letter-spacing:0.72px;">22/02/2024</div><svg style="position:absolute;left:48px;top:886px" width="48" height="36" viewBox="0 0 48 36"><rect x="1.3" y="1.3" width="45.4" height="11" fill="#eef5fd" stroke="#a8bcd4" stroke-width="2.6"/><rect x="1.3" y="12.3" width="45.4" height="11" fill="#8db8f0" stroke="#4f7ac0" stroke-width="2.6"/><rect x="1.3" y="23.3" width="45.4" height="11.4" fill="#f59a9b" stroke="#c9474d" stroke-width="2.6"/><path d="M7.5 6.5 H20.5 V19 Q14 28 7.5 19 Z" fill="#fff"/><path d="M9.5 8.5 H18.5 V18 Q14 23.5 9.5 18 Z" fill="#f59a9b" stroke="#c9474d" stroke-width="2.2"/></svg><div class="t" style="left:112.3px;top:887.0px;font-size:35px;line-height:35px;color:#1e1e1e;letter-spacing:-0.23px;">Slovakia</div><div class="t" style="left:515.8px;top:887.0px;font-size:35px;line-height:35px;color:#1e1e1e;letter-spacing:-1.10px;">SLOVAK</div><svg style="position:absolute;left:824px;top:880px" width="48" height="48" viewBox="0 0 48 48"><path d="M24 2 L46 24 L24 46 L2 24 Z" fill="#fff" stroke="#a93434" stroke-width="3" stroke-linejoin="round"/><path d="M20 14 Q20 11 24 11 Q28 11 28 14 L25.6 30 H22.4 Z" fill="#000"/><circle cx="24" cy="34" r="3.3" fill="#000"/></svg><div class="t" style="left:888.8px;top:887.0px;font-size:35px;line-height:35px;color:#1e1e1e;letter-spacing:0.21px;">2020/878</div><svg style="position:absolute;left:1078px;top:882px" width="44" height="44" viewBox="0 0 44 44"><rect x="6.75" y="6.75" width="30.5" height="30.5" rx="4.5" fill="#b9dfbc" stroke="#62a070" stroke-width="3.2" transform="rotate(45 22 22)"/></svg><div class="t" style="left:1140.8px;top:887.0px;font-size:35px;line-height:35px;color:#1e1e1e;letter-spacing:0.75px;">Current</div><svg style="position:absolute;left:1818px;top:892px" width="48" height="24" viewBox="0 0 48 24"><g fill="#5f9f6e"><rect x="0" y="6" width="2.6" height="12"/><rect x="6" y="6" width="2.6" height="12"/><rect x="12" y="6" width="2.6" height="12"/></g><path d="M19.3 7.3 H32 V1.5 L46.5 12 L32 22.5 V16.7 H19.3 Z" fill="#b9e0bc" stroke="#5f9f6e" stroke-width="2.6"/></svg><div class="t" style="left:1884.3px;top:887.0px;font-size:35px;line-height:35px;color:#1e1e1e;letter-spacing:1.50px;">Notify</div><div class="t" style="left:2129.8px;top:887.0px;font-size:35px;line-height:35px;color:#1e1e1e;letter-spacing:-0.29px;">VZOR Nebezpečná zmes</div><div class="t" style="left:2937.8px;top:887.0px;font-size:35px;line-height:35px;color:#1e1e1e;letter-spacing:0.83px;">Trial ltd.</div><div class="t" style="left:3532.8px;top:887.0px;font-size:35px;line-height:35px;color:#1e1e1e;letter-spacing:0.72px;">09/07/2024</div><svg style="position:absolute;left:48px;top:965px" width="48" height="36" viewBox="0 0 48 36"><rect x="1.3" y="1.3" width="45.4" height="33.4" fill="#f59a9b" stroke="#c9474d" stroke-width="2.6"/><rect x="1.3" y="1.3" width="17" height="33.4" fill="#9ccf9f" stroke="#5e9c6c" stroke-width="2.6"/><circle cx="18.5" cy="18" r="8" fill="#ffeba0"/><path d="M14 13 H23 V20 Q18.5 25 14 20 Z" fill="#e35f63" stroke="#fff" stroke-width="1"/></svg><div class="t" style="left:112.3px;top:966.0px;font-size:35px;line-height:35px;color:#1e1e1e;letter-spacing:0.83px;">Portugal</div><div class="t" style="left:515.8px;top:966.0px;font-size:35px;line-height:35px;color:#1e1e1e;letter-spacing:-2.69px;">PORTUGUESE</div><svg style="position:absolute;left:824px;top:959px" width="48" height="48" viewBox="0 0 48 48"><path d="M24 2 L46 24 L24 46 L2 24 Z" fill="#fff" stroke="#a93434" stroke-width="3" stroke-linejoin="round"/><path d="M20 14 Q20 11 24 11 Q28 11 28 14 L25.6 30 H22.4 Z" fill="#000"/><circle cx="24" cy="34" r="3.3" fill="#000"/></svg><div class="t" style="left:888.8px;top:966.0px;font-size:35px;line-height:35px;color:#1e1e1e;letter-spacing:0.21px;">2020/878</div><svg style="position:absolute;left:1078px;top:961px" width="44" height="44" viewBox="0 0 44 44"><rect x="6.75" y="6.75" width="30.5" height="30.5" rx="4.5" fill="#f6c46e" stroke="#c99a4c" stroke-width="3.2" transform="rotate(45 22 22)"/></svg><div class="t" style="left:1140.8px;top:966.0px;font-size:35px;line-height:35px;color:#1e1e1e;">Expiring substance</div><svg style="position:absolute;left:1818px;top:971px" width="48" height="24" viewBox="0 0 48 24"><g fill="#5f9f6e"><rect x="0" y="6" width="2.6" height="12"/><rect x="6" y="6" width="2.6" height="12"/><rect x="12" y="6" width="2.6" height="12"/></g><path d="M19.3 7.3 H32 V1.5 L46.5 12 L32 22.5 V16.7 H19.3 Z" fill="#b9e0bc" stroke="#5f9f6e" stroke-width="2.6"/></svg><div class="t" style="left:1884.3px;top:966.0px;font-size:35px;line-height:35px;color:#1e1e1e;letter-spacing:1.50px;">Notify</div><div class="t" style="left:2129.8px;top:966.0px;font-size:35px;line-height:35px;color:#1e1e1e;letter-spacing:-0.30px;">EXEMPLO Mistura perigosa</div><div class="t" style="left:2937.8px;top:966.0px;font-size:35px;line-height:35px;color:#1e1e1e;letter-spacing:0.83px;">Trial ltd.</div><div class="t" style="left:3532.8px;top:966.0px;font-size:35px;line-height:35px;color:#1e1e1e;letter-spacing:0.72px;">22/02/2024</div><svg style="position:absolute;left:48px;top:1044px" width="48" height="36" viewBox="0 0 48 36"><rect x="1.3" y="1.3" width="45.4" height="33.4" fill="#8db8f0" stroke="#4f7ac0" stroke-width="2.6"/><rect x="15" y="0" width="6" height="36" fill="#f6c46e"/><rect x="0" y="15" width="48" height="6" fill="#f6c46e"/><rect x="15" y="2.6" width="6" height="30.8" fill="#ffe9a0"/><rect x="2.6" y="15" width="42.8" height="6" fill="#ffe9a0"/></svg><div class="t" style="left:112.3px;top:1045.0px;font-size:35px;line-height:35px;color:#1e1e1e;letter-spacing:-0.30px;">Sweden</div><div class="t" style="left:515.8px;top:1045.0px;font-size:35px;line-height:35px;color:#1e1e1e;letter-spacing:-1.92px;">SWEDISH</div><svg style="position:absolute;left:824px;top:1038px" width="48" height="48" viewBox="0 0 48 48"><path d="M24 2 L46 24 L24 46 L2 24 Z" fill="#fff" stroke="#a93434" stroke-width="3" stroke-linejoin="round"/><path d="M20 14 Q20 11 24 11 Q28 11 28 14 L25.6 30 H22.4 Z" fill="#000"/><circle cx="24" cy="34" r="3.3" fill="#000"/></svg><div class="t" style="left:888.8px;top:1045.0px;font-size:35px;line-height:35px;color:#1e1e1e;letter-spacing:0.21px;">2020/878</div><svg style="position:absolute;left:1078px;top:1040px" width="44" height="44" viewBox="0 0 44 44"><rect x="6.75" y="6.75" width="30.5" height="30.5" rx="4.5" fill="#b9dfbc" stroke="#62a070" stroke-width="3.2" transform="rotate(45 22 22)"/></svg><div class="t" style="left:1140.8px;top:1045.0px;font-size:35px;line-height:35px;color:#1e1e1e;letter-spacing:0.75px;">Current</div><svg style="position:absolute;left:1818px;top:1050px" width="48" height="24" viewBox="0 0 48 24"><g fill="#5f9f6e"><rect x="0" y="6" width="2.6" height="12"/><rect x="6" y="6" width="2.6" height="12"/><rect x="12" y="6" width="2.6" height="12"/></g><path d="M19.3 7.3 H32 V1.5 L46.5 12 L32 22.5 V16.7 H19.3 Z" fill="#b9e0bc" stroke="#5f9f6e" stroke-width="2.6"/></svg><div class="t" style="left:1884.3px;top:1045.0px;font-size:35px;line-height:35px;color:#1e1e1e;letter-spacing:1.50px;">Notify</div><div class="t" style="left:2129.8px;top:1045.0px;font-size:35px;line-height:35px;color:#1e1e1e;letter-spacing:-3.32px;">EXEMPEL</div><div class="t" style="left:3532.8px;top:1045.0px;font-size:35px;line-height:35px;color:#1e1e1e;letter-spacing:0.72px;">20/03/2021</div><svg style="position:absolute;left:48px;top:1123px" width="48" height="36" viewBox="0 0 48 36"><rect x="1.3" y="1.3" width="45.4" height="16.7" fill="#eef5fd" stroke="#a8bcd4" stroke-width="2.6"/><rect x="1.3" y="18" width="45.4" height="16.7" fill="#f59a9b" stroke="#c9474d" stroke-width="2.6"/><path d="M1.3 1.3 L22.5 18 L1.3 34.7 Z" fill="#8db8f0" stroke="#4f7ac0" stroke-width="2.6" stroke-linejoin="bevel"/></svg><div class="t" style="left:112.3px;top:1124.0px;font-size:35px;line-height:35px;color:#1e1e1e;letter-spacing:-0.05px;">Czech Republic</div><div class="t" style="left:515.8px;top:1124.0px;font-size:35px;line-height:35px;color:#1e1e1e;letter-spacing:-3.00px;">CZECH</div><svg style="position:absolute;left:824px;top:1117px" width="48" height="48" viewBox="0 0 48 48"><path d="M24 2 L46 24 L24 46 L2 24 Z" fill="#fff" stroke="#e06464" stroke-width="3" stroke-linejoin="round"/><path d="M20 14 Q20 11 24 11 Q28 11 28 14 L25.6 30 H22.4 Z" fill="#000"/><circle cx="24" cy="34" r="3.3" fill="#000"/></svg><div class="t" style="left:888.8px;top:1124.0px;font-size:35px;line-height:35px;color:#1e1e1e;letter-spacing:0.46px;">2015/830</div><svg style="position:absolute;left:1078px;top:1119px" width="44" height="44" viewBox="0 0 44 44"><rect x="6.75" y="6.75" width="30.5" height="30.5" rx="4.5" fill="#f59a9b" stroke="#c9474d" stroke-width="3.2" transform="rotate(45 22 22)"/></svg><div class="t" style="left:1140.8px;top:1124.0px;font-size:35px;line-height:35px;color:#1e1e1e;letter-spacing:0.39px;">Oudated format, Oudated substance</div><svg style="position:absolute;left:1818px;top:1129px" width="48" height="24" viewBox="0 0 48 24"><g fill="#5f9f6e"><rect x="0" y="6" width="2.6" height="12"/><rect x="6" y="6" width="2.6" height="12"/><rect x="12" y="6" width="2.6" height="12"/></g><path d="M19.3 7.3 H32 V1.5 L46.5 12 L32 22.5 V16.7 H19.3 Z" fill="#b9e0bc" stroke="#5f9f6e" stroke-width="2.6"/></svg><div class="t" style="left:1884.3px;top:1124.0px;font-size:35px;line-height:35px;color:#1e1e1e;letter-spacing:1.50px;">Notify</div><div class="t" style="left:2129.8px;top:1124.0px;font-size:35px;line-height:35px;color:#1e1e1e;letter-spacing:-0.15px;">Nebezpečná směs</div><div class="t" style="left:3532.8px;top:1124.0px;font-size:35px;line-height:35px;color:#1e1e1e;letter-spacing:0.94px;">03/11/2017</div><svg style="position:absolute;left:48px;top:1202px" width="45" height="33" viewBox="0 0 45 33"><rect x="1.3" y="1.3" width="42.4" height="30.4" fill="#eef5fd" stroke="#4f7ac0" stroke-width="2.6"/><path d="M3 3 L42 30 M42 3 L3 30" stroke="#fff" stroke-width="6"/><path d="M3 3 L42 30 M42 3 L3 30" stroke="#c9474d" stroke-width="2.4"/><rect x="2.6" y="12.5" width="39.8" height="8" fill="#fff"/><rect x="18.5" y="2.6" width="8" height="27.8" fill="#fff"/><rect x="2.6" y="14.5" width="39.8" height="4" fill="#c9474d"/><rect x="20.5" y="2.6" width="4" height="27.8" fill="#c9474d"/><rect x="1.3" y="1.3" width="42.4" height="30.4" fill="none" stroke="#4f7ac0" stroke-width="2.6"/></svg><div class="t" style="left:112.3px;top:1203.0px;font-size:35px;line-height:35px;color:#1e1e1e;letter-spacing:0.96px;">United Kingdom</div><div class="t" style="left:515.8px;top:1203.0px;font-size:35px;line-height:35px;color:#1e1e1e;letter-spacing:-1.92px;">ENGLISH</div><svg style="position:absolute;left:824px;top:1196px" width="48" height="48" viewBox="0 0 48 48"><path d="M24 2 L46 24 L24 46 L2 24 Z" fill="#fff" stroke="#e06464" stroke-width="3" stroke-linejoin="round"/><path d="M20 14 Q20 11 24 11 Q28 11 28 14 L25.6 30 H22.4 Z" fill="#000"/><circle cx="24" cy="34" r="3.3" fill="#000"/></svg><div class="t" style="left:888.8px;top:1203.0px;font-size:35px;line-height:35px;color:#1e1e1e;letter-spacing:0.46px;">2015/830</div><svg style="position:absolute;left:1078px;top:1198px" width="44" height="44" viewBox="0 0 44 44"><rect x="6.75" y="6.75" width="30.5" height="30.5" rx="4.5" fill="#b9dfbc" stroke="#62a070" stroke-width="3.2" transform="rotate(45 22 22)"/></svg><div class="t" style="left:1140.8px;top:1203.0px;font-size:35px;line-height:35px;color:#1e1e1e;letter-spacing:0.75px;">Current</div><svg style="position:absolute;left:1818px;top:1208px" width="48" height="24" viewBox="0 0 48 24"><g fill="#5f9f6e"><rect x="0" y="6" width="2.6" height="12"/><rect x="6" y="6" width="2.6" height="12"/><rect x="12" y="6" width="2.6" height="12"/></g><path d="M19.3 7.3 H32 V1.5 L46.5 12 L32 22.5 V16.7 H19.3 Z" fill="#b9e0bc" stroke="#5f9f6e" stroke-width="2.6"/></svg><div class="t" style="left:1884.3px;top:1203.0px;font-size:35px;line-height:35px;color:#1e1e1e;letter-spacing:1.50px;">Notify</div><div class="t" style="left:2129.8px;top:1203.0px;font-size:35px;line-height:35px;color:#1e1e1e;letter-spacing:-0.35px;">EXAMPLE Dangerous mixture</div><div class="t" style="left:2937.8px;top:1203.0px;font-size:35px;line-height:35px;color:#1e1e1e;letter-spacing:0.83px;">Trial ltd.</div><div class="t" style="left:3532.8px;top:1203.0px;font-size:35px;line-height:35px;color:#1e1e1e;letter-spacing:0.72px;">09/07/2024</div><svg style="position:absolute;left:48px;top:1281px" width="48" height="36" viewBox="0 0 48 36"><rect x="1.3" y="1.3" width="45.4" height="16.7" fill="#8db8f0" stroke="#4f7ac0" stroke-width="2.6"/><rect x="1.3" y="18" width="45.4" height="16.7" fill="#ffeba0" stroke="#f6c46e" stroke-width="2.6"/></svg><div class="t" style="left:112.3px;top:1282.0px;font-size:35px;line-height:35px;color:#1e1e1e;letter-spacing:0.58px;">Ukraine</div><div class="t" style="left:515.8px;top:1282.0px;font-size:35px;line-height:35px;color:#1e1e1e;letter-spacing:-0.36px;">UKRAINIAN</div><svg style="position:absolute;left:824px;top:1275px" width="48" height="48" viewBox="0 0 48 48"><path d="M24 2 L46 24 L24 46 L2 24 Z" fill="#fff" stroke="#a93434" stroke-width="3" stroke-linejoin="round"/><path d="M20 14 Q20 11 24 11 Q28 11 28 14 L25.6 30 H22.4 Z" fill="#000"/><circle cx="24" cy="34" r="3.3" fill="#000"/></svg><div class="t" style="left:888.8px;top:1282.0px;font-size:35px;line-height:35px;color:#1e1e1e;letter-spacing:0.21px;">2020/878</div><svg style="position:absolute;left:1078px;top:1277px" width="44" height="44" viewBox="0 0 44 44"><rect x="6.75" y="6.75" width="30.5" height="30.5" rx="4.5" fill="#c6d9f0" stroke="#7a8ea8" stroke-width="3.2" transform="rotate(45 22 22)"/></svg><div class="t" style="left:1140.8px;top:1282.0px;font-size:35px;line-height:35px;color:#1e1e1e;letter-spacing:-0.39px;">Unable to assess</div><svg style="position:absolute;left:1818px;top:1292.5px" width="46" height="10" viewBox="0 0 46 10"><rect x="1.3" y="1.3" width="43" height="7" fill="#f59a9b" stroke="#c9474d" stroke-width="2.6"/></svg><div class="t" style="left:1884.3px;top:1282.0px;font-size:35px;line-height:35px;color:#1e1e1e;letter-spacing:0.24px;">Unable to n...</div><div class="t" style="left:2129.8px;top:1282.0px;font-size:35px;line-height:35px;color:#1e1e1e;letter-spacing:0.49px;">ПРИКЛАД Небезпечна суміш</div><div class="t" style="left:2937.8px;top:1282.0px;font-size:35px;line-height:35px;color:#1e1e1e;letter-spacing:0.83px;">Trial ltd.</div><div class="t" style="left:3532.8px;top:1282.0px;font-size:35px;line-height:35px;color:#1e1e1e;letter-spacing:0.72px;">09/07/2024</div><svg style="position:absolute;left:48px;top:1360px" width="48" height="36" viewBox="0 0 48 36"><rect x="1.3" y="1.3" width="45.4" height="33.4" fill="#f59a9b" stroke="#c9474d" stroke-width="2.6"/><circle cx="19" cy="18" r="8" fill="#fff"/><circle cx="21.5" cy="18" r="6.3" fill="#f59a9b"/><path d="M28 14.5 L29 17 L31.5 17 L29.5 18.5 L30.3 21 L28 19.5 L25.7 21 L26.5 18.5 L24.5 17 L27 17 Z" fill="#fff"/></svg><div class="t" style="left:112.3px;top:1361.0px;font-size:35px;line-height:35px;color:#1e1e1e;letter-spacing:0.50px;">Turkey</div><div class="t" style="left:515.8px;top:1361.0px;font-size:35px;line-height:35px;color:#1e1e1e;letter-spacing:-1.92px;">TURKISH</div><svg style="position:absolute;left:824px;top:1354px" width="48" height="48" viewBox="0 0 48 48"><path d="M24 2 L46 24 L24 46 L2 24 Z" fill="#fff" stroke="#a93434" stroke-width="3" stroke-linejoin="round"/><path d="M20 14 Q20 11 24 11 Q28 11 28 14 L25.6 30 H22.4 Z" fill="#000"/><circle cx="24" cy="34" r="3.3" fill="#000"/></svg><div class="t" style="left:888.8px;top:1361.0px;font-size:35px;line-height:35px;color:#1e1e1e;letter-spacing:-0.07px;">30105</div><svg style="position:absolute;left:1078px;top:1356px" width="44" height="44" viewBox="0 0 44 44"><rect x="6.75" y="6.75" width="30.5" height="30.5" rx="4.5" fill="#b9dfbc" stroke="#62a070" stroke-width="3.2" transform="rotate(45 22 22)"/></svg><div class="t" style="left:1140.8px;top:1361.0px;font-size:35px;line-height:35px;color:#1e1e1e;letter-spacing:0.75px;">Current</div><svg style="position:absolute;left:1818px;top:1371.5px" width="46" height="10" viewBox="0 0 46 10"><rect x="1.3" y="1.3" width="43" height="7" fill="#f59a9b" stroke="#c9474d" stroke-width="2.6"/></svg><div class="t" style="left:1884.3px;top:1361.0px;font-size:35px;line-height:35px;color:#1e1e1e;letter-spacing:0.24px;">Unable to n...</div><div class="t" style="left:2129.8px;top:1361.0px;font-size:35px;line-height:35px;color:#1e1e1e;letter-spacing:-0.17px;">ÖRNEK Tehlikeli karışım</div><div class="t" style="left:2937.8px;top:1361.0px;font-size:35px;line-height:35px;color:#1e1e1e;letter-spacing:0.83px;">Trial ltd.</div><div class="t" style="left:3532.8px;top:1361.0px;font-size:35px;line-height:35px;color:#1e1e1e;letter-spacing:0.72px;">09/07/2024</div><svg style="position:absolute;left:48px;top:1439px" width="48" height="36" viewBox="0 0 48 36"><rect x="1.3" y="1.3" width="45.4" height="33.4" fill="#f59a9b" stroke="#c9474d" stroke-width="2.6"/><rect x="21" y="10" width="6" height="16" fill="#fff"/><rect x="16" y="15" width="16" height="6" fill="#fff"/></svg><div class="t" style="left:112.3px;top:1440.0px;font-size:35px;line-height:35px;color:#1e1e1e;letter-spacing:0.21px;">Switzerland</div><div class="t" style="left:515.8px;top:1440.0px;font-size:35px;line-height:35px;color:#1e1e1e;letter-spacing:-1.30px;">GERMAN</div><svg style="position:absolute;left:824px;top:1433px" width="48" height="48" viewBox="0 0 48 48"><path d="M24 2 L46 24 L24 46 L2 24 Z" fill="#fff" stroke="#a93434" stroke-width="3" stroke-linejoin="round"/><path d="M20 14 Q20 11 24 11 Q28 11 28 14 L25.6 30 H22.4 Z" fill="#000"/><circle cx="24" cy="34" r="3.3" fill="#000"/></svg><div class="t" style="left:888.8px;top:1440.0px;font-size:35px;line-height:35px;color:#1e1e1e;letter-spacing:0.21px;">2020/878</div><svg style="position:absolute;left:1078px;top:1435px" width="44" height="44" viewBox="0 0 44 44"><rect x="6.75" y="6.75" width="30.5" height="30.5" rx="4.5" fill="#b9dfbc" stroke="#62a070" stroke-width="3.2" transform="rotate(45 22 22)"/></svg><div class="t" style="left:1140.8px;top:1440.0px;font-size:35px;line-height:35px;color:#1e1e1e;letter-spacing:0.75px;">Current</div><svg style="position:absolute;left:1818px;top:1450.5px" width="46" height="10" viewBox="0 0 46 10"><rect x="1.3" y="1.3" width="43" height="7" fill="#f59a9b" stroke="#c9474d" stroke-width="2.6"/></svg><div class="t" style="left:1884.3px;top:1440.0px;font-size:35px;line-height:35px;color:#1e1e1e;letter-spacing:0.24px;">Unable to n...</div><div class="t" style="left:2129.8px;top:1440.0px;font-size:35px;line-height:35px;color:#1e1e1e;letter-spacing:-0.26px;">MUSTER Gefährliche Mischung</div><div class="t" style="left:2937.8px;top:1440.0px;font-size:35px;line-height:35px;color:#1e1e1e;letter-spacing:0.83px;">Trial ltd.</div><div class="t" style="left:3532.8px;top:1440.0px;font-size:35px;line-height:35px;color:#1e1e1e;letter-spacing:0.72px;">09/07/2024</div><svg style="position:absolute;left:48px;top:1518px" width="48" height="36" viewBox="0 0 48 36"><rect x="1.3" y="1.3" width="45.4" height="33.4" fill="#8db8f0" stroke="#4f7ac0" stroke-width="2.6"/><rect x="15" y="0" width="6" height="36" fill="#f6c46e"/><rect x="0" y="15" width="48" height="6" fill="#f6c46e"/><rect x="15" y="2.6" width="6" height="30.8" fill="#ffe9a0"/><rect x="2.6" y="15" width="42.8" height="6" fill="#ffe9a0"/></svg><div class="t" style="left:112.3px;top:1519.0px;font-size:35px;line-height:35px;color:#1e1e1e;letter-spacing:-0.30px;">Sweden</div><div class="t" style="left:515.8px;top:1519.0px;font-size:35px;line-height:35px;color:#1e1e1e;letter-spacing:-1.92px;">SWEDISH</div><svg style="position:absolute;left:824px;top:1512px" width="48" height="48" viewBox="0 0 48 48"><path d="M24 2 L46 24 L24 46 L2 24 Z" fill="#fff" stroke="#a93434" stroke-width="3" stroke-linejoin="round"/><path d="M20 14 Q20 11 24 11 Q28 11 28 14 L25.6 30 H22.4 Z" fill="#000"/><circle cx="24" cy="34" r="3.3" fill="#000"/></svg><div class="t" style="left:888.8px;top:1519.0px;font-size:35px;line-height:35px;color:#1e1e1e;letter-spacing:0.21px;">2020/878</div><svg style="position:absolute;left:1078px;top:1514px" width="44" height="44" viewBox="0 0 44 44"><rect x="6.75" y="6.75" width="30.5" height="30.5" rx="4.5" fill="#b9dfbc" stroke="#62a070" stroke-width="3.2" transform="rotate(45 22 22)"/></svg><div class="t" style="left:1140.8px;top:1519.0px;font-size:35px;line-height:35px;color:#1e1e1e;letter-spacing:0.75px;">Current</div><svg style="position:absolute;left:1818px;top:1524px" width="48" height="24" viewBox="0 0 48 24"><g fill="#5f9f6e"><rect x="0" y="6" width="2.6" height="12"/><rect x="6" y="6" width="2.6" height="12"/><rect x="12" y="6" width="2.6" height="12"/></g><path d="M19.3 7.3 H32 V1.5 L46.5 12 L32 22.5 V16.7 H19.3 Z" fill="#b9e0bc" stroke="#5f9f6e" stroke-width="2.6"/></svg><div class="t" style="left:1884.3px;top:1519.0px;font-size:35px;line-height:35px;color:#1e1e1e;letter-spacing:1.50px;">Notify</div><div class="t" style="left:2129.8px;top:1519.0px;font-size:35px;line-height:35px;color:#1e1e1e;letter-spacing:-0.53px;">EXEMPEL Farlig blandning</div><div class="t" style="left:2937.8px;top:1519.0px;font-size:35px;line-height:35px;color:#1e1e1e;letter-spacing:0.83px;">Trial ltd.</div><div class="t" style="left:3532.8px;top:1519.0px;font-size:35px;line-height:35px;color:#1e1e1e;letter-spacing:0.72px;">09/07/2024</div><svg style="position:absolute;left:48px;top:1597px" width="48" height="36" viewBox="0 0 48 36"><rect x="1.3" y="1.3" width="45.4" height="33.4" fill="#ffeba0" stroke="#f6c46e" stroke-width="2.6"/><rect x="1.3" y="1.3" width="45.4" height="7.5" fill="#f59a9b" stroke="#c9474d" stroke-width="2.6"/><rect x="1.3" y="27.2" width="45.4" height="7.5" fill="#f59a9b" stroke="#c9474d" stroke-width="2.6"/><path d="M9.5 12.5 H17 V20 Q13.25 24 9.5 20 Z" fill="#f59a9b" stroke="#c9474d" stroke-width="2.2"/></svg><div class="t" style="left:112.3px;top:1598.0px;font-size:35px;line-height:35px;color:#1e1e1e;letter-spacing:-0.18px;">Spain</div><div class="t" style="left:515.8px;top:1598.0px;font-size:35px;line-height:35px;color:#1e1e1e;letter-spacing:-0.97px;">SPANISH</div><svg style="position:absolute;left:824px;top:1591px" width="48" height="48" viewBox="0 0 48 48"><path d="M24 2 L46 24 L24 46 L2 24 Z" fill="#fff" stroke="#a93434" stroke-width="3" stroke-linejoin="round"/><path d="M20 14 Q20 11 24 11 Q28 11 28 14 L25.6 30 H22.4 Z" fill="#000"/><circle cx="24" cy="34" r="3.3" fill="#000"/></svg><div class="t" style="left:888.8px;top:1598.0px;font-size:35px;line-height:35px;color:#1e1e1e;letter-spacing:0.21px;">2020/878</div><svg style="position:absolute;left:1078px;top:1593px" width="44" height="44" viewBox="0 0 44 44"><rect x="6.75" y="6.75" width="30.5" height="30.5" rx="4.5" fill="#b9dfbc" stroke="#62a070" stroke-width="3.2" transform="rotate(45 22 22)"/></svg><div class="t" style="left:1140.8px;top:1598.0px;font-size:35px;line-height:35px;color:#1e1e1e;letter-spacing:0.75px;">Current</div><svg style="position:absolute;left:1818px;top:1603px" width="48" height="24" viewBox="0 0 48 24"><g fill="#5f9f6e"><rect x="0" y="6" width="2.6" height="12"/><rect x="6" y="6" width="2.6" height="12"/><rect x="12" y="6" width="2.6" height="12"/></g><path d="M19.3 7.3 H32 V1.5 L46.5 12 L32 22.5 V16.7 H19.3 Z" fill="#b9e0bc" stroke="#5f9f6e" stroke-width="2.6"/></svg><div class="t" style="left:1884.3px;top:1598.0px;font-size:35px;line-height:35px;color:#1e1e1e;letter-spacing:1.50px;">Notify</div><div class="t" style="left:2129.8px;top:1598.0px;font-size:35px;line-height:35px;color:#1e1e1e;letter-spacing:-0.07px;">MODELO Mezcla peligrosa</div><div class="t" style="left:2937.8px;top:1598.0px;font-size:35px;line-height:35px;color:#1e1e1e;letter-spacing:0.83px;">Trial ltd.</div><div class="t" style="left:3532.8px;top:1598.0px;font-size:35px;line-height:35px;color:#1e1e1e;letter-spacing:0.72px;">09/07/2024</div><svg style="position:absolute;left:48px;top:1676px" width="48" height="36" viewBox="0 0 48 36"><rect x="1.3" y="1.3" width="45.4" height="11" fill="#f59a9b" stroke="#c9474d" stroke-width="2.6"/><rect x="1.3" y="12.3" width="45.4" height="11" fill="#8db8f0" stroke="#4f7ac0" stroke-width="2.6"/><rect x="1.3" y="23.3" width="45.4" height="11.4" fill="#eef5fd" stroke="#a8bcd4" stroke-width="2.6"/><rect x="12" y="9" width="12" height="5" fill="#a8865a"/><path d="M13 13 H23 V21 Q18 27 13 21 Z" fill="#e35f63" stroke="#fff" stroke-width="1.2"/></svg><div class="t" style="left:112.3px;top:1677.0px;font-size:35px;line-height:35px;color:#1e1e1e;letter-spacing:0.25px;">Republic of Serbia</div><div class="t" style="left:515.8px;top:1677.0px;font-size:35px;line-height:35px;color:#1e1e1e;letter-spacing:-0.98px;">SERBIAN (LATIN)</div><svg style="position:absolute;left:824px;top:1670px" width="48" height="48" viewBox="0 0 48 48"><path d="M24 2 L46 24 L24 46 L2 24 Z" fill="#fff" stroke="#a93434" stroke-width="3" stroke-linejoin="round"/><path d="M20 14 Q20 11 24 11 Q28 11 28 14 L25.6 30 H22.4 Z" fill="#000"/><circle cx="24" cy="34" r="3.3" fill="#000"/></svg><div class="t" style="left:888.8px;top:1677.0px;font-size:35px;line-height:35px;color:#1e1e1e;letter-spacing:0.21px;">2020/878</div><svg style="position:absolute;left:1078px;top:1672px" width="44" height="44" viewBox="0 0 44 44"><rect x="6.75" y="6.75" width="30.5" height="30.5" rx="4.5" fill="#b9dfbc" stroke="#62a070" stroke-width="3.2" transform="rotate(45 22 22)"/></svg><div class="t" style="left:1140.8px;top:1677.0px;font-size:35px;line-height:35px;color:#1e1e1e;letter-spacing:0.75px;">Current</div><svg style="position:absolute;left:1818px;top:1687.5px" width="46" height="10" viewBox="0 0 46 10"><rect x="1.3" y="1.3" width="43" height="7" fill="#f59a9b" stroke="#c9474d" stroke-width="2.6"/></svg><div class="t" style="left:1884.3px;top:1677.0px;font-size:35px;line-height:35px;color:#1e1e1e;letter-spacing:0.24px;">Unable to n...</div><div class="t" style="left:2129.8px;top:1677.0px;font-size:35px;line-height:35px;color:#1e1e1e;letter-spacing:-0.83px;">UZORAK Opasna smesa</div><div class="t" style="left:2937.8px;top:1677.0px;font-size:35px;line-height:35px;color:#1e1e1e;letter-spacing:0.83px;">Trial ltd.</div><div class="t" style="left:3532.8px;top:1677.0px;font-size:35px;line-height:35px;color:#1e1e1e;letter-spacing:0.72px;">09/07/2024</div><svg style="position:absolute;left:48px;top:1755px" width="48" height="36" viewBox="0 0 48 36"><rect x="1.3" y="1.3" width="45.4" height="11" fill="#eef5fd" stroke="#a8bcd4" stroke-width="2.6"/><rect x="1.3" y="12.3" width="45.4" height="11" fill="#8db8f0" stroke="#4f7ac0" stroke-width="2.6"/><rect x="1.3" y="23.3" width="45.4" height="11.4" fill="#f59a9b" stroke="#c9474d" stroke-width="2.6"/><path d="M9 7 H20 V16 Q14.5 24 9 16 Z" fill="#e35f63" stroke="#fff" stroke-width="1.5"/><path d="M11 10 L13 13 L14.5 10 L16 13 L18 10 V15 H11 Z" fill="#fff"/></svg><div class="t" style="left:112.3px;top:1756.0px;font-size:35px;line-height:35px;color:#1e1e1e;letter-spacing:-0.21px;">Slovenia</div><div class="t" style="left:515.8px;top:1756.0px;font-size:35px;line-height:35px;color:#1e1e1e;letter-spacing:-1.11px;">SLOVENIAN</div><svg style="position:absolute;left:824px;top:1749px" width="48" height="48" viewBox="0 0 48 48"><path d="M24 2 L46 24 L24 46 L2 24 Z" fill="#fff" stroke="#a93434" stroke-width="3" stroke-linejoin="round"/><path d="M20 14 Q20 11 24 11 Q28 11 28 14 L25.6 30 H22.4 Z" fill="#000"/><circle cx="24" cy="34" r="3.3" fill="#000"/></svg><div class="t" style="left:888.8px;top:1756.0px;font-size:35px;line-height:35px;color:#1e1e1e;letter-spacing:0.21px;">2020/878</div><svg style="position:absolute;left:1078px;top:1751px" width="44" height="44" viewBox="0 0 44 44"><rect x="6.75" y="6.75" width="30.5" height="30.5" rx="4.5" fill="#b9dfbc" stroke="#62a070" stroke-width="3.2" transform="rotate(45 22 22)"/></svg><div class="t" style="left:1140.8px;top:1756.0px;font-size:35px;line-height:35px;color:#1e1e1e;letter-spacing:0.75px;">Current</div><svg style="position:absolute;left:1818px;top:1761px" width="48" height="24" viewBox="0 0 48 24"><g fill="#5f9f6e"><rect x="0" y="6" width="2.6" height="12"/><rect x="6" y="6" width="2.6" height="12"/><rect x="12" y="6" width="2.6" height="12"/></g><path d="M19.3 7.3 H32 V1.5 L46.5 12 L32 22.5 V16.7 H19.3 Z" fill="#b9e0bc" stroke="#5f9f6e" stroke-width="2.6"/></svg><div class="t" style="left:1884.3px;top:1756.0px;font-size:35px;line-height:35px;color:#1e1e1e;letter-spacing:1.50px;">Notify</div><div class="t" style="left:2129.8px;top:1756.0px;font-size:35px;line-height:35px;color:#1e1e1e;letter-spacing:-0.66px;">PRIMER Nevarna mešanica</div><div class="t" style="left:2937.8px;top:1756.0px;font-size:35px;line-height:35px;color:#1e1e1e;letter-spacing:0.83px;">Trial ltd.</div><div class="t" style="left:3532.8px;top:1756.0px;font-size:35px;line-height:35px;color:#1e1e1e;letter-spacing:0.72px;">09/07/2024</div><svg style="position:absolute;left:48px;top:1834px" width="48" height="33" viewBox="0 0 48 33"><rect x="1.3" y="1.3" width="45.4" height="30.4" fill="#fff" stroke="#4f7ac0" stroke-width="2.6"/><rect x="1.3" y="2.6" width="45.4" height="3.0" fill="#8db8f0"/><rect x="1.3" y="8.6" width="45.4" height="3.0" fill="#8db8f0"/><rect x="1.3" y="14.6" width="45.4" height="3.0" fill="#8db8f0"/><rect x="1.3" y="20.6" width="45.4" height="3.0" fill="#8db8f0"/><rect x="1.3" y="26.6" width="45.4" height="3.0" fill="#8db8f0"/><rect x="1.3" y="1.3" width="16" height="15" fill="#8db8f0"/><rect x="8" y="2" width="3" height="14" fill="#fff"/><rect x="2" y="7.5" width="15" height="3" fill="#fff"/><rect x="1.3" y="1.3" width="45.4" height="30.4" fill="none" stroke="#4f7ac0" stroke-width="2.6"/></svg><div class="t" style="left:112.3px;top:1835.0px;font-size:35px;line-height:35px;color:#1e1e1e;letter-spacing:-0.16px;">Greece</div><div class="t" style="left:515.8px;top:1835.0px;font-size:35px;line-height:35px;color:#1e1e1e;letter-spacing:-4.23px;">GREEK</div><svg style="position:absolute;left:824px;top:1828px" width="48" height="48" viewBox="0 0 48 48"><path d="M24 2 L46 24 L24 46 L2 24 Z" fill="#fff" stroke="#a93434" stroke-width="3" stroke-linejoin="round"/><path d="M20 14 Q20 11 24 11 Q28 11 28 14 L25.6 30 H22.4 Z" fill="#000"/><circle cx="24" cy="34" r="3.3" fill="#000"/></svg><div class="t" style="left:888.8px;top:1835.0px;font-size:35px;line-height:35px;color:#1e1e1e;letter-spacing:0.21px;">2020/878</div><svg style="position:absolute;left:1078px;top:1830px" width="44" height="44" viewBox="0 0 44 44"><rect x="6.75" y="6.75" width="30.5" height="30.5" rx="4.5" fill="#b9dfbc" stroke="#62a070" stroke-width="3.2" transform="rotate(45 22 22)"/></svg><div class="t" style="left:1140.8px;top:1835.0px;font-size:35px;line-height:35px;color:#1e1e1e;letter-spacing:0.75px;">Current</div><svg style="position:absolute;left:1818px;top:1840px" width="48" height="24" viewBox="0 0 48 24"><g fill="#5f9f6e"><rect x="0" y="6" width="2.6" height="12"/><rect x="6" y="6" width="2.6" height="12"/><rect x="12" y="6" width="2.6" height="12"/></g><path d="M19.3 7.3 H32 V1.5 L46.5 12 L32 22.5 V16.7 H19.3 Z" fill="#b9e0bc" stroke="#5f9f6e" stroke-width="2.6"/></svg><div class="t" style="left:1884.3px;top:1835.0px;font-size:35px;line-height:35px;color:#1e1e1e;letter-spacing:1.50px;">Notify</div><div class="t" style="left:2129.8px;top:1835.0px;font-size:35px;line-height:35px;color:#1e1e1e;letter-spacing:0.42px;">ΠΑΡΑΔΕΙΓΜΑ Επικίνδυνο μείγμα</div><div class="t" style="left:2937.8px;top:1835.0px;font-size:35px;line-height:35px;color:#1e1e1e;letter-spacing:0.83px;">Trial ltd.</div><div class="t" style="left:3532.8px;top:1835.0px;font-size:35px;line-height:35px;color:#1e1e1e;letter-spacing:0.72px;">09/07/2024</div><div style="position:absolute;left:63px;top:1919px;width:745px;height:74px;background:#fff;border:3px solid #e2e2e2;border-bottom-color:#d0d0d0;border-radius:12px;box-sizing:border-box"></div><svg style="position:absolute;left:0;top:0" width="900" height="2000" viewBox="0 0 900 2000"><rect x="82" y="1944" width="3.2" height="24" fill="#6e6e6e"/><path d="M102.0 1944.5 L90.0 1956.3 L102.0 1968" fill="none" stroke="#6e6e6e" stroke-width="3.2"/><path d="M114.0 1944.5 L102.0 1956.3 L114.0 1968" fill="none" stroke="#6e6e6e" stroke-width="3.2"/><path d="M172.0 1944.5 L160.0 1956.3 L172.0 1968" fill="none" stroke="#6e6e6e" stroke-width="3.2"/><path d="M184.0 1944.5 L172.0 1956.3 L184.0 1968" fill="none" stroke="#6e6e6e" stroke-width="3.2"/><path d="M250.0 1944.5 L238.0 1956.3 L250.0 1968" fill="none" stroke="#6e6e6e" stroke-width="3.2"/><path d="M623.0 1944.5 L635.0 1956.3 L623.0 1968" fill="none" stroke="#222222" stroke-width="3.2"/><path d="M689.0 1944.5 L701.0 1956.3 L689.0 1968" fill="none" stroke="#222222" stroke-width="3.2"/><path d="M701.0 1944.5 L713.0 1956.3 L701.0 1968" fill="none" stroke="#222222" stroke-width="3.2"/><path d="M758.0 1944.5 L770.0 1956.3 L758.0 1968" fill="none" stroke="#222222" stroke-width="3.2"/><path d="M770.0 1944.5 L782.0 1956.3 L770.0 1968" fill="none" stroke="#222222" stroke-width="3.2"/><rect x="788" y="1944" width="3.2" height="24" fill="#222222"/></svg><div class="t" style="left:310.8px;top:1940.4px;font-size:35px;line-height:35px;color:#1e1e1e;letter-spacing:0.39px;">Record 1 of 111</div><div style="position:absolute;left:0px;top:2056px;width:3840px;height:3px;background:#d6d6d6"></div><div style="position:absolute;left:0px;top:2059px;width:3840px;height:101px;background:#f9f9f9"></div></body></html>
